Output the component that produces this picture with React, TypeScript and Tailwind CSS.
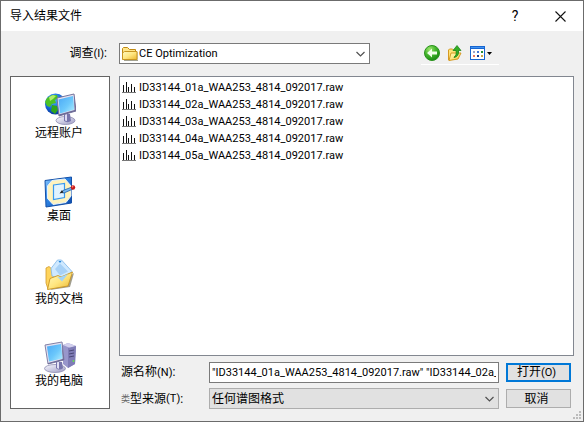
import React from "react";

const files = [
  "ID33144_01a_WAA253_4814_092017.raw",
  "ID33144_02a_WAA253_4814_092017.raw",
  "ID33144_03a_WAA253_4814_092017.raw",
  "ID33144_04a_WAA253_4814_092017.raw",
  "ID33144_05a_WAA253_4814_092017.raw",
];

function Defs() {
  return (
    <svg width="0" height="0" className="absolute" aria-hidden="true">
      <defs>
        <linearGradient id="screen" x1="0" y1="0" x2="1" y2="1">
          <stop offset="0" stopColor="#4aa8f6" />
          <stop offset="0.55" stopColor="#6cc8fb" />
          <stop offset="1" stopColor="#b5f0ff" />
        </linearGradient>
        <radialGradient id="globe" cx="0.4" cy="0.3" r="0.75">
          <stop offset="0" stopColor="#58b4ff" />
          <stop offset="0.6" stopColor="#1264d8" />
          <stop offset="1" stopColor="#082c8c" />
        </radialGradient>
        <linearGradient id="base" x1="0" y1="0" x2="1" y2="1">
          <stop offset="0" stopColor="#fafaff" />
          <stop offset="1" stopColor="#9d9bc4" />
        </linearGradient>
        <linearGradient id="blue" x1="0" y1="0" x2="1" y2="1">
          <stop offset="0" stopColor="#8ccaff" />
          <stop offset="0.4" stopColor="#2f86e6" />
          <stop offset="1" stopColor="#0b47a8" />
        </linearGradient>
        <linearGradient id="gold" x1="0" y1="0" x2="1" y2="1">
          <stop offset="0" stopColor="#fffac0" />
          <stop offset="0.5" stopColor="#ffe680" />
          <stop offset="1" stopColor="#eab52c" />
        </linearGradient>
        <radialGradient id="green" cx="0.35" cy="0.25" r="0.8">
          <stop offset="0" stopColor="#9be56c" />
          <stop offset="0.5" stopColor="#43b52c" />
          <stop offset="1" stopColor="#168710" />
        </radialGradient>
      </defs>
    </svg>
  );
}

function NetworkIcon() {
  return (
    <svg width="32" height="32" viewBox="0 0 32 32" aria-hidden="true">
      <circle cx="11.500" cy="11" r="10.500" fill="url(#globe)" />
      <path d="M3 5 8 2l5 0 1 3-3 2 1 3-4 1-2 3-3-1-2-4z" fill="#4dc324" />
      <path d="M8 12l5 1 1 4-3 4-4-3z" fill="#2fa51c" />
      <path d="M5 4 9 2l3 1-3 3-3 2z" fill="#b2ec6c" />
      <ellipse cx="21.500" cy="27.500" rx="9.500" ry="4" fill="url(#base)" stroke="#8482aa" strokeWidth="0.7" />
      <path d="M20 21h6l1 7c-2 1.500-5 1.500-7 0z" fill="#7775ac" />
      <path d="M21 21h2l0 7-2-.5z" fill="#dddcf3" />
      <path d="M13 5 30 1l2 17-17 5z" fill="#e2e1f1" stroke="#77759d" strokeWidth="1" />
      <path d="M30 1l2 17-17 5-.2-1.500L30.500 17z" fill="#6c6996" />
      <path d="M14.500 6.500 29 3l1.300 13.500L16 20.500z" fill="url(#screen)" />
    </svg>
  );
}

function DesktopIcon() {
  return (
    <svg width="32" height="32" viewBox="0 0 32 32" aria-hidden="true">
      <path d="M1 4.500 27.500 1v26L2 31z" fill="url(#blue)" stroke="#1450a8" strokeWidth="1" />
      <path d="M8 4.500 21 3l6 7v10l-5 6.500-13 2-5.500-6V10z" fill="#fff3bd" stroke="#e4f2ff" strokeWidth="1" />
      <path d="M9.500 9l11-1.500v14l-11 2z" fill="#e0f3ff" stroke="#3799ef" strokeWidth="1.200" />
      <path d="M17 16.500l2-2 9-3.500 1 2-9 4z" fill="#79b8ef" stroke="#2061a9" strokeWidth="0.8" />
      <path d="M15.500 17.500 18 14l1.500 2.500z" fill="#222" />
      <circle cx="29" cy="11.500" r="2.200" fill="#c91818" />
      <circle cx="28.600" cy="10.800" r="0.8" fill="#ff9484" />
    </svg>
  );
}

function DocumentsIcon() {
  return (
    <svg width="32" height="32" viewBox="0 0 32 32" aria-hidden="true">
      <path d="M6 31 26 28l4-14z" fill="#a09d8d" />
      <path d="M2 9l3-1.500 4 3.500 18 1-5 13L4 30 2 24z" fill="#ffd45c" stroke="#d09a2a" strokeWidth="0.8" />
      <path d="M7 9.500 13.500 1h4L28 12.500 19 21 8 17z" fill="#cfe9ff" stroke="#7fb6e8" strokeWidth="0.8" />
      <path d="M14.500 2h3L16 4z" fill="#2786da" />
      <path d="M11 10l5-5.500 8 8-8 4z" fill="#96c6f3" opacity="0.7" />
      <path d="M3.500 30.500 6 19.500l8-3 3 1.500 11.500-5L24 27z" fill="url(#gold)" stroke="#cb9522" strokeWidth="0.9" />
      <path d="M13 17.500l3 .8 8-3.300-6 7.500z" fill="#a3d4f6" />
    </svg>
  );
}

function ComputerIcon() {
  return (
    <svg width="32" height="32" viewBox="0 0 32 32" aria-hidden="true">
      <path d="M19 4l5-2 8 3-1 18-7 4-5-4z" fill="#9896cb" />
      <path d="M19 4l5-2 8 3-6 2z" fill="#d1cfed" />
      <path d="M24 7l8-2-1 18-7 4z" fill="#7f7cb6" />
      <path d="M25 10l5-1M25 13l5-1M25 16l5-1" stroke="#4a4776" strokeWidth="1" />
      <circle cx="29.500" cy="20" r="1" fill="#64e447" />
      <ellipse cx="11" cy="27.500" rx="10.500" ry="4" fill="url(#base)" stroke="#8482aa" strokeWidth="0.7" />
      <path d="M12 21h6l1 6c-2 2-5 2-7 0z" fill="#7775ac" />
      <path d="M13 21h2v7l-2-1z" fill="#e2e1f4" />
      <path d="M1 4 18 1l2 18-16 4z" fill="#e2e1f1" stroke="#8381a6" strokeWidth="1" />
      <path d="M18 1l2 18-16 4v-1l14.500-4z" fill="#6c6996" />
      <path d="M3 5.500 17 3l1.500 14.500-13.500 3z" fill="url(#screen)" />
    </svg>
  );
}

function FolderIcon() {
  return (
    <svg width="16" height="16" viewBox="0 0 16 16" className="shrink-0" aria-hidden="true">
      <path d="M2 14.500h14V6" fill="none" stroke="#a3a18f" strokeWidth="1" />
      <path d="M.5 13V2.500l1-1h4l2 2h6V13z" fill="#ffe68a" stroke="#bf8913" />
      <path d="M.5 13.500V7l2-1.500h12.500v8z" fill="url(#gold)" stroke="#c99622" />
    </svg>
  );
}

function Chevron() {
  return (
    <svg width="9" height="6" viewBox="0 0 9 6" className="pointer-events-none shrink-0" aria-hidden="true">
      <path d="M.5 1 4.500 5l4-4" fill="none" stroke="#505050" strokeWidth="1.200" />
    </svg>
  );
}

function SpectrumIcon() {
  return (
    <svg width="14" height="12" viewBox="0 0 14 12" shapeRendering="crispEdges" className="shrink-0" aria-hidden="true">
      <path d="M1 3h1v7H1zM4 0h1v10H4zM6 5h1v5H6zM9 2h1v8H9zM12 5h1v5h-1z" fill="#111" />
      <path d="M0 10h14v1H0z" fill="#777" />
    </svg>
  );
}

function Key({ letter }: { letter: string }) {
  return <span className="text-[11px]">({letter})</span>;
}

const places = [
  { label: "远程账户", Icon: NetworkIcon },
  { label: "桌面", Icon: DesktopIcon },
  { label: "我的文档", Icon: DocumentsIcon },
  { label: "我的电脑", Icon: ComputerIcon },
];

export default function App() {
  return (
    <div className="relative flex min-h-screen flex-col border border-[#6b6b6b] bg-[#f0f0f0] font-[Roboto,'Noto_Sans_CJK_SC',sans-serif] text-xs leading-4 text-black">
      <Defs />
      <header className="flex h-[30px] items-center bg-white pl-[9px]">
        <h1 className="flex-1">导入结果文件</h1>
        <button aria-label="帮助" className="h-full w-7 text-sm">?</button>
        <button aria-label="关闭" className="ml-2 flex h-full w-[46px] items-center justify-center">
          <svg width="11" height="11" viewBox="0 0 11 11" aria-hidden="true">
            <path d="M.5.5l10 10M10.500.5l-10 10" stroke="#111" strokeWidth="1.100" />
          </svg>
        </button>
      </header>

      <main className="flex flex-1 flex-col px-[9px] pt-3 pb-3">
        <div className="flex h-[21px] items-center">
          <label htmlFor="folder" className="w-[109px] shrink-0 pr-3 text-right">
            调查<Key letter="I" />:
          </label>
          <div className="flex h-[21px] max-w-[251px] flex-1 items-center gap-px border border-[#7a7a7a] bg-white pr-1 pl-0.5">
            <FolderIcon />
            <select id="folder" className="min-w-0 flex-1 appearance-none bg-transparent text-[11px] outline-none">
              <option>CE Optimization</option>
            </select>
            <Chevron />
          </div>
          <div className="ml-[51px] flex h-[22px] w-[78px] items-center gap-2 border-b border-white pl-[3px]">
            <button aria-label="后退">
              <svg width="16" height="16" viewBox="0 0 16 16" className="block" aria-hidden="true">
                <circle cx="8" cy="8" r="7.500" fill="url(#green)" stroke="#29931c" />
                <path d="M3 8l5-4.500v3h5v3H8v3z" fill="#efffe9" />
              </svg>
            </button>
            <button aria-label="向上一级">
              <svg width="14" height="16" viewBox="0 0 14 16" className="block" aria-hidden="true">
                <path d="M.5 15V5l1-1h3l1 1H10v8z" fill="#ffe276" stroke="#d59a23" />
                <path d="M1 15.500 3 8h10l-3 6z" fill="url(#gold)" stroke="#d59a23" />
                <path d="M6 12c2-1 2.500-3 2-6.500H5L9 .5 13 5.500h-2.500c.5 4-1 6.500-4.500 7z" fill="#34ad25" stroke="#167e14" strokeWidth="0.7" />
              </svg>
            </button>
            <button aria-label="查看方式" className="flex items-center gap-0.5">
              <svg width="15" height="14" viewBox="0 0 15 14" shapeRendering="crispEdges" aria-hidden="true">
                <path d="M0 0h15v14H0z" fill="#1765d1" />
                <path d="M1 1h13v1H1z" fill="#4294f0" />
                <path d="M1 3h13v10H1z" fill="#fff" />
                <path d="M3 5h2v2H3z" fill="#99a4ca" />
                <path d="M7 5h2v2H7z" fill="#4378d5" />
                <path d="M11 5h2v2h-2z" fill="#258d35" />
                <path d="M3 9h2v2H3z" fill="#e9785d" />
                <path d="M7 9h2v2H7z" fill="#183c91" />
                <path d="M11 9h2v2h-2z" fill="#c9a646" />
              </svg>
              <svg width="5" height="3" viewBox="0 0 5 3" aria-hidden="true">
                <path d="M0 0h5L2.500 3z" />
              </svg>
            </button>
          </div>
        </div>

        <div className="mt-3 flex flex-1 gap-[9px]">
          <nav className="flex w-[100px] shrink-0 flex-col border border-[#646464] bg-white">
            {places.map(({ label, Icon }) => (
              <button key={label} className="flex min-h-[82px] flex-1 flex-col items-center pt-4">
                <Icon />
                <span className="pr-0.5">{label}</span>
              </button>
            ))}
          </nav>

          <div className="flex min-w-0 flex-1 flex-col">
            <ul className="flex-1 border border-[#828790] bg-white px-0.5 pt-0.5 text-[11px]">
              {files.map((name) => (
                <li key={name} className="flex h-[17px] items-center gap-[3px]">
                  <SpectrumIcon />
                  {name}
                </li>
              ))}
            </ul>

            <div className="mt-1.5 mr-[3px] flex h-[21px] items-center">
              <label htmlFor="name" className="w-[90px] shrink-0 pl-0.5">
                源名称<Key letter="N" />:
              </label>
              <input
                id="name"
                defaultValue={'"' + files.join('" "') + '"'}
                className="h-[21px] min-w-0 flex-1 border border-[#7a7a7a] bg-white px-0.5 text-[11px] outline-none"
              />
              <button className="ml-[7px] h-[19px] w-[65px] border-2 border-[#0078d7] bg-[#e1e1e1] pr-1 leading-[15px]">
                打开<Key letter="O" />
              </button>
            </div>
            <div className="mt-[5px] mr-[3px] flex h-[21px] items-center">
              <label htmlFor="type" className="flex w-[90px] shrink-0 items-center pl-0.5">
                <span className="text-[9px] text-[#666666]">类</span>型来源<Key letter="T" />:
              </label>
              <div className="flex h-[21px] min-w-0 flex-1 items-center border border-[#adadad] bg-[#e1e1e1] pr-1 pl-0.5">
                <select id="type" className="min-w-0 flex-1 appearance-none bg-transparent outline-none">
                  <option>任何谱图格式</option>
                </select>
                <Chevron />
              </div>
              <button className="ml-[7px] h-[19px] w-[65px] border border-[#adadad] bg-[#e1e1e1] pr-1 leading-4">取消</button>
            </div>
          </div>
        </div>
      </main>

      <svg
        width="8"
        height="8"
        viewBox="0 0 8 8"
        className="absolute right-0.5 bottom-0.5"
        shapeRendering="crispEdges"
        aria-hidden="true"
      >
        <path d="M6 0h2v2H6zM3 3h2v2H3zM6 3h2v2H6zM0 6h2v2H0zM3 6h2v2H3zM6 6h2v2H6z" fill="#bcbcbc" />
      </svg>
    </div>
  );
}
